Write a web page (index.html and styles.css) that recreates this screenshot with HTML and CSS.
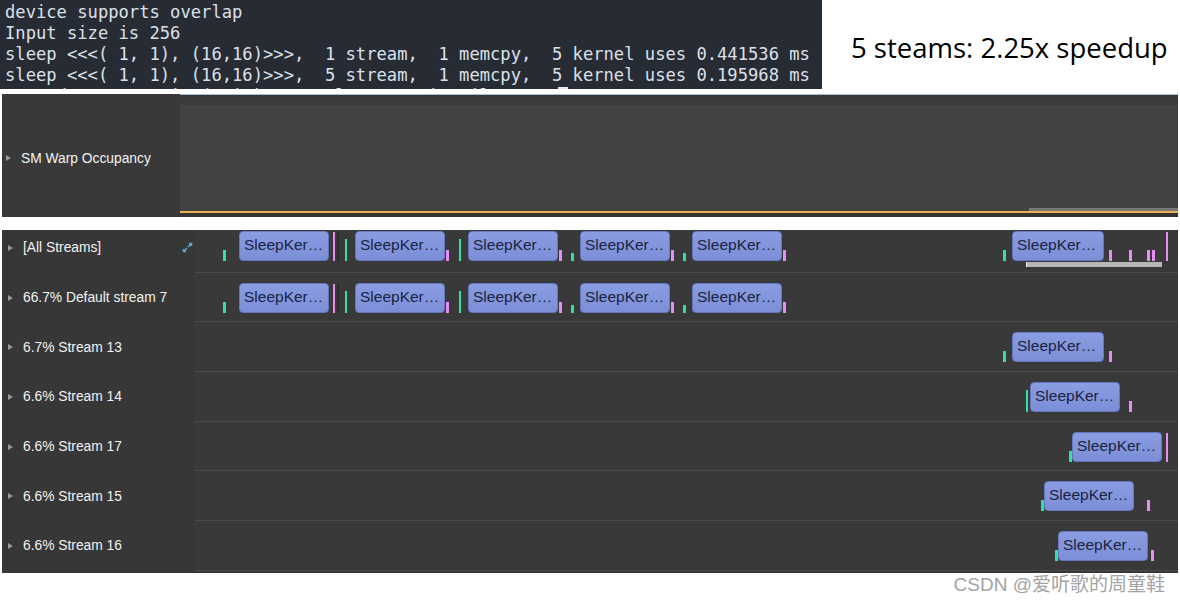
FILE: index.html
```html
<!DOCTYPE html>
<html lang="en">
  <head>
    <meta charset="UTF-8" />
    <meta name="viewport" content="width=device-width, initial-scale=1.0" />
    <title>CUDA streams overlap</title>
    <link rel="stylesheet" href="styles.css">
  </head>

  <body>
    <div class="top">
      <div class="terminal">
        <div class="line_t">device supports overlap</div>
        <div class="line_t">Input size is 256</div>
        <div class="line_t">sleep &lt;&lt;&lt;( 1, 1), (16,16)&gt;&gt;&gt;,  1 stream,  1 memcpy,  5 kernel uses 0.441536 ms</div>
        <div class="line_t">sleep &lt;&lt;&lt;( 1, 1), (16,16)&gt;&gt;&gt;,  5 stream,  1 memcpy,  5 kernel uses 0.195968 ms</div>
        <div class="line_t"><span class="prompt">➜</span>  cuda-stream git:(main) ./overlap_test | tail -n 20<span class="cursor"></span></div>
      </div>
      <div class="title">5 steams: 2.25x speedup</div>
    </div>

    <div class="occupancy">
      <div class="label"><span class="arrow"></span>SM Warp Occupancy</div>
      <div class="occ_chart">
        <div class="occ_bar"></div>
      </div>
    </div>

    <div class="streams">
      <div class="rows">
        <div class="row first">
          <div class="label">
            <span class="arrow"></span>[All Streams]
            <svg class="expand" width="11" height="11" viewBox="0 0 11 11">
              <path d="M6 5 L9 2 M7 1.5 H9.5 V4 M5 6 L2 9 M1.5 7 V9.5 H4" stroke="#5fa3d8" stroke-width="1.5" fill="none"/>
            </svg>
          </div>
          <div class="track">
            <span class="tick g" style="left:28px"></span>
            <span class="kernel" style="left:44px">SleepKer…</span>
            <span class="line p" style="left:138px"></span>
            <span class="line d" style="left:142px"></span>
            <span class="line g" style="left:150px"></span>
            <span class="kernel" style="left:160px">SleepKer…</span>
            <span class="tick p" style="left:251px"></span>
            <span class="line g" style="left:264px"></span>
            <span class="kernel" style="left:273px">SleepKer…</span>
            <span class="tick p" style="left:364px"></span>
            <span class="tick g short" style="left:376px"></span>
            <span class="kernel" style="left:385px">SleepKer…</span>
            <span class="tick p" style="left:476px"></span>
            <span class="tick g short" style="left:488px"></span>
            <span class="kernel" style="left:497px">SleepKer…</span>
            <span class="tick p" style="left:588px"></span>
            <span class="tick g" style="left:808px"></span>
            <span class="kernel wide" style="left:817px">SleepKer…</span>
            <span class="tick p" style="left:914px"></span>
            <span class="tick p" style="left:934px"></span>
            <span class="tick p" style="left:952px"></span>
            <span class="tick p" style="left:957px"></span>
            <span class="line p" style="left:971px"></span>
            <span class="memcpy" style="left:831px"></span>
          </div>
        </div>

        <div class="row">
          <div class="label"><span class="arrow"></span>66.7% Default stream 7</div>
          <div class="track">
            <span class="tick g" style="left:28px"></span>
            <span class="kernel" style="left:44px">SleepKer…</span>
            <span class="line p" style="left:138px"></span>
            <span class="line d" style="left:142px"></span>
            <span class="line g" style="left:150px"></span>
            <span class="kernel" style="left:160px">SleepKer…</span>
            <span class="tick p" style="left:251px"></span>
            <span class="line g" style="left:264px"></span>
            <span class="kernel" style="left:273px">SleepKer…</span>
            <span class="tick p" style="left:364px"></span>
            <span class="tick g short" style="left:376px"></span>
            <span class="kernel" style="left:385px">SleepKer…</span>
            <span class="tick p" style="left:476px"></span>
            <span class="tick g short" style="left:488px"></span>
            <span class="kernel" style="left:497px">SleepKer…</span>
            <span class="tick p" style="left:588px"></span>
          </div>
        </div>

        <div class="row">
          <div class="label"><span class="arrow"></span>6.7% Stream 13</div>
          <div class="track">
            <span class="tick g" style="left:808px"></span>
            <span class="kernel wide" style="left:817px">SleepKer…</span>
            <span class="tick p" style="left:914px"></span>
          </div>
        </div>

        <div class="row">
          <div class="label"><span class="arrow"></span>6.6% Stream 14</div>
          <div class="track">
            <span class="line g" style="left:831px"></span>
            <span class="kernel" style="left:835px">SleepKer…</span>
            <span class="tick p" style="left:934px"></span>
          </div>
        </div>

        <div class="row">
          <div class="label"><span class="arrow"></span>6.6% Stream 17</div>
          <div class="track">
            <span class="tick g" style="left:874px"></span>
            <span class="kernel" style="left:877px">SleepKer…</span>
            <span class="line p" style="left:971px"></span>
          </div>
        </div>

        <div class="row">
          <div class="label"><span class="arrow"></span>6.6% Stream 15</div>
          <div class="track">
            <span class="tick g" style="left:846px"></span>
            <span class="kernel" style="left:849px">SleepKer…</span>
            <span class="tick p" style="left:952px"></span>
          </div>
        </div>

        <div class="row">
          <div class="label"><span class="arrow"></span>6.6% Stream 16</div>
          <div class="track">
            <span class="tick g" style="left:860px"></span>
            <span class="kernel" style="left:863px">SleepKer…</span>
            <span class="tick p" style="left:956px"></span>
          </div>
        </div>
      </div>
    </div>

    <div class="watermark">CSDN @爱听歌的周童鞋</div>
  </body>
</html>
```

FILE: styles.css
```css
* {
  padding: 0;
  margin: 0;
  box-sizing: border-box;
}
body {
  width: 1180px;
  height: 603px;
  background: #fff;
  overflow: hidden;
  font-family: "Liberation Sans", Arial, sans-serif;
}

/* terminal + headline */
.top {
  display: flex;
  height: 90px;
}
.terminal {
  width: 822px;
  height: 89px;
  overflow: hidden;
  padding: 2px 0 0 5px;
  background: #272b34;
  color: #dce0ea;
  font-family: "DejaVu Sans Mono", monospace;
  font-size: 17.15px;
  line-height: 21px;
}
.line_t {
  white-space: pre;
}
.terminal .prompt {
  color: #e6c24a;
}
.terminal .cursor {
  display: inline-block;
  width: 10px;
  height: 18px;
  margin-left: 6px;
  vertical-align: -3px;
  background: #e8e8f0;
}
.title {
  padding: 30px 0 0 29px;
  font-family: "Open Sans", sans-serif;
  font-size: 27.5px;
  line-height: 36px;
  color: #000;
  white-space: nowrap;
}

/* shared label column */
.label {
  display: flex;
  align-items: center;
  padding-left: 6px;
  color: #f2f2f2;
  font-size: 13.8px;
  white-space: nowrap;
}
.arrow {
  width: 0;
  height: 0;
  margin-right: 10px;
  border-left: 5px solid #9a9a9a;
  border-top: 3.5px solid transparent;
  border-bottom: 3.5px solid transparent;
}

/* SM warp occupancy */
.occupancy {
  display: flex;
  width: 1176px;
  height: 123px;
  margin: 4px 0 0 2px;
  background: #333;
}
.occupancy .label {
  width: 178px;
  padding: 5px 0 0 4px;
  background: #393939;
}
.occ_chart {
  position: relative;
  flex: 1;
  margin-bottom: 4px;
  border-top: 1px solid #a6bfd8;
  border-bottom: 2px solid #e9b24e;
  background: linear-gradient(#363636 0, #363636 2px, #3b3b3b 2px, #3b3b3b 10px, #434343 10px);
}
.occ_bar {
  position: absolute;
  right: 0;
  bottom: 0;
  width: 149px;
  height: 3px;
  background: #767676;
}

/* stream rows */
.streams {
  width: 1176px;
  height: 343px;
  margin: 13px 0 0 2px;
  overflow: hidden;
  background: #373737;
}
.rows {
  margin-top: -7px;
}
.row {
  display: flex;
  height: 49.7px;
}
.row .label {
  width: 193px;
  position: relative;
}
.expand {
  position: absolute;
  left: 180px;
  top: 19px;
}
.track {
  position: relative;
  flex: 1;
  background: #393939;
  border-bottom: 1px solid #4a4a4a;
}
.row.first .track > span {
  margin-top: -2px;
}

.kernel {
  position: absolute;
  top: 10px;
  width: 90px;
  height: 30px;
  padding-left: 4px;
  border: 1px solid #6376c0;
  border-radius: 4px;
  background: linear-gradient(#8a9de2, #7b8ed7);
  color: #1b2340;
  font-size: 15.5px;
  line-height: 25px;
  white-space: nowrap;
  overflow: hidden;
}
.kernel.wide {
  width: 92px;
}

.tick,
.line {
  position: absolute;
}
.tick {
  top: 29px;
  width: 3px;
  height: 11px;
}
.tick.short {
  top: 32px;
  height: 8px;
}
.line {
  top: 11px;
  width: 2px;
  height: 29px;
}
.line.g {
  top: 18px;
  height: 22px;
}
.g {
  background: #30e0a6;
}
.p {
  background: #e38ef0;
}
.line.d {
  background: #2c2c2c;
}

.memcpy {
  position: absolute;
  top: 41px;
  width: 136px;
  height: 5px;
  border-left: 1px solid #f4f4f4;
  background: #b7b7b7;
}

.watermark {
  padding-right: 15px;
  text-align: right;
  color: #a3a3a3;
  font-family: "Liberation Sans", "Noto Sans CJK SC", sans-serif;
  font-size: 19px;
  line-height: 24px;
}
```
